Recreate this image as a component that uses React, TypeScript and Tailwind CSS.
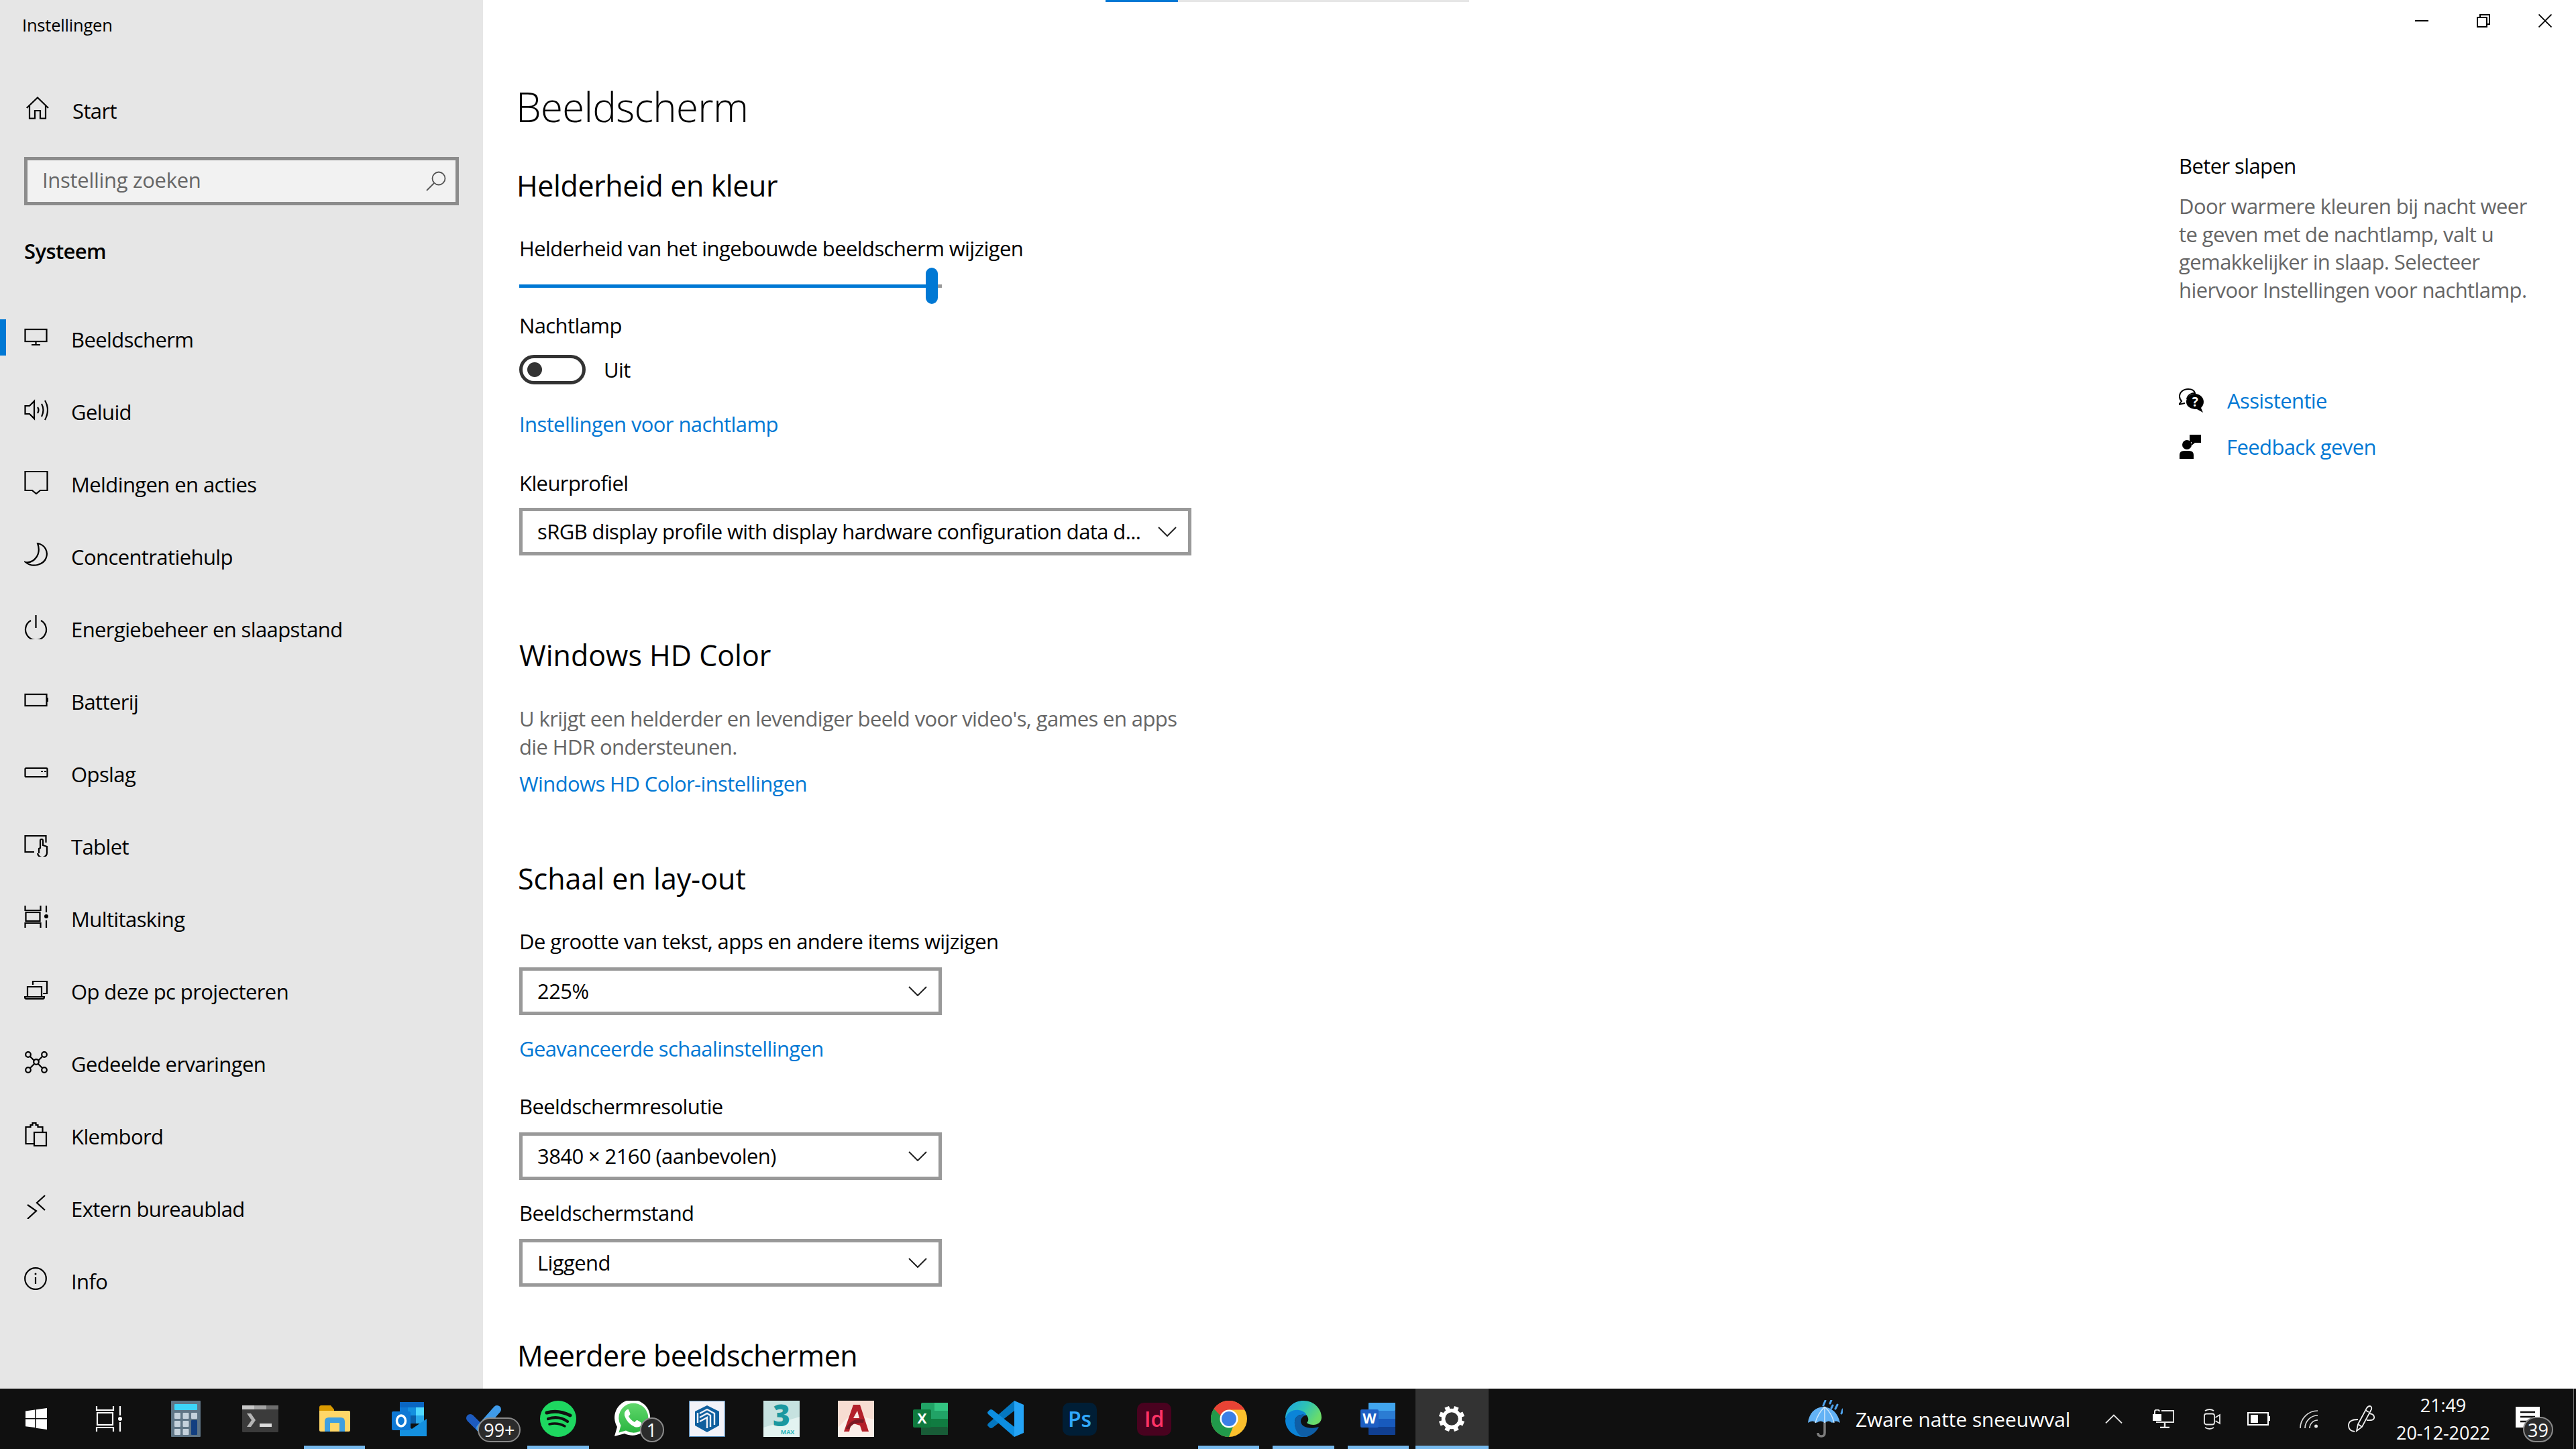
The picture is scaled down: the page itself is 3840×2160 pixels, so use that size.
import React from 'react';

const link = 'text-[#0078d4]';

const NavIcon: React.FC<{ children: React.ReactNode }> = ({ children }) => (
  <svg width="36" height="36" viewBox="0 0 36 36" fill="none" stroke="#000" strokeWidth="2.2" className="shrink-0 -mt-[6px]">
    {children}
  </svg>
);

const navItems: { label: string; icon: React.ReactNode }[] = [
  { label: 'Beeldscherm', icon: <><rect x="1.5" y="6" width="32" height="18" /><path d="M17.5 24v4.500M11 29h13" /></> },
  { label: 'Geluid', icon: <><path d="M1.500 12H8l7-7v26l-7-7H1.500z" /><path d="M20 14q3 4 0 9M26 9q5 9 0 19M31 4q8 14 0 29" /></> },
  { label: 'Meldingen en acties', icon: <path d="M1.500 2h33v28H24l-6 5-6-5H1.500z" /> },
  { label: 'Concentratiehulp', icon: <path d="M20 1c11 2 16 12 13 21-4 11-20 16-31 7 13 2 24-12 18-28z" /> },
  { label: 'Energiebeheer en slaapstand', icon: <><path d="M10 8a15.500 15.500 0 1 0 15 0" /><path d="M17.500 0v19" /></> },
  { label: 'Batterij', icon: <><rect x="1.500" y="10" width="32" height="17" /><path d="M34.500 15v6" strokeWidth="3" /></> },
  { label: 'Opslag', icon: <><rect x="1.500" y="12" width="33" height="13" rx="1.500" /><path d="M25 17h3M30 17h3" /></> },
  { label: 'Tablet', icon: <><path d="M15 29H1.500V5h31v10" /><path d="M22 31v-7l2-1v-11a2 2 0 0 1 4 0v7l6 2v8a7 7 0 0 1-14 2" /></> },
  { label: 'Multitasking', icon: <><path d="M1.500 1v7h23V1M1.500 34v-7h23v7" /><rect x="2.500" y="11" width="21" height="13" /><path d="M33 1v10M33 23v11" /><circle cx="33" cy="17" r="3" fill="#000" stroke="none" /></> },
  { label: 'Op deze pc projecteren', icon: <><path d="M13 11V6h21v18H28" /><path d="M5 28V14h21v14M1 29h29q0 3-2 3H3q-2 0-2-3z" /></> },
  { label: 'Gedeelde ervaringen', icon: <><circle cx="6" cy="7" r="3.800" /><circle cx="30" cy="7" r="3.800" /><circle cx="6" cy="30" r="3.800" /><circle cx="30" cy="30" r="3.800" /><circle cx="18" cy="18" r="3.800" /><path d="M9 10l6 6M27 10l-6 6M9 27l6-6M27 27l-6-6" /></> },
  { label: 'Klembord', icon: <><path d="M16 32H2.500V7h7V4h3V1h5v3h3v3h7v7" /><rect x="15" y="15" width="18" height="20" /></> },
  { label: 'Extern bureaublad', icon: <path d="M5 15l13 9-13 12M31 1L19 12l12 11" /> },
  { label: 'Info', icon: <><circle cx="17" cy="17" r="15.800" /><path d="M17 15v10" /><circle cx="17" cy="10" r="1.500" fill="#000" stroke="none" /></> },
];

const Dropdown: React.FC<{ value: string; width: string }> = ({ value, width }) => (
  <div className={`h-[71px] ${width} border-[5px] border-[#999999] flex items-center justify-between pl-[22px] pr-[17px] whitespace-nowrap`}>
    <span>{value}</span>
    <svg width="28" height="15" viewBox="0 0 28 15" fill="none" stroke="#222" strokeWidth="2" className="shrink-0"><path d="M1 1l13 13L27 1" /></svg>
  </div>
);

const TaskCell: React.FC<{ w?: string; bar?: boolean; active?: boolean; children: React.ReactNode }> = ({ w = 'w-[111.100px]', bar, active, children }) => (
  <div className={`relative h-full shrink-0 flex items-center justify-center ${w} ${active ? 'bg-[#333333]' : ''}`}>
    {children}
    {bar && <div className={`absolute bottom-0 h-[5px] bg-[#76b9ed] ${active ? 'inset-x-0' : 'inset-x-[10px]'}`} />}
  </div>
);

const Badge: React.FC<{ className: string; children: React.ReactNode }> = ({ className, children }) => (
  <div className={`absolute rounded-full bg-[#2b2b2b] border-[2px] border-[#8a8a8a] text-white flex items-center justify-center text-[27px] leading-none ${className}`}>{children}</div>
);

const gearTeeth = [22.5, 67.5, 112.5, 157.5, 202.5, 247.5, 292.5, 337.5];

const apps: { icon: React.ReactNode; bar?: boolean; active?: boolean; w?: string; badge?: React.ReactNode }[] = [
  { w: 'w-[108px]', icon: <svg width="32" height="32" viewBox="0 0 32 32" fill="#fff"><path d="M0 4.500L14 2.500V15H0zM15.500 2.300L32 0v15H15.500zM0 16.500h14V29L0 27.200zM15.500 16.500H32V32l-16.500-2.300z" /></svg> },
  { w: 'w-[113px]', icon: <svg width="40" height="38" viewBox="0 0 40 38" fill="none" stroke="#fff" strokeWidth="2.200" className="-ml-[6px]"><path d="M2 0v6h25V0M2 38v-6h25v6" /><rect x="3" y="10" width="23" height="18" /><path d="M37 0v14M37 24v14" /><circle cx="37" cy="19" r="3" fill="#fff" stroke="none" /></svg> },
  { icon: <svg width="44" height="54" viewBox="0 0 44 54"><rect width="44" height="54" rx="1" fill="#5f7585" /><rect x="5" y="5" width="34" height="9" rx="1" fill="#3dd5f8" /><g fill="#c5d2dc"><rect x="5" y="18" width="9" height="9" rx="1" /><rect x="17.500" y="18" width="9" height="9" rx="1" /><rect x="30" y="18" width="9" height="9" rx="1" /><rect x="5" y="30" width="9" height="9" rx="1" /><rect x="17.500" y="30" width="9" height="9" rx="1" /><rect x="5" y="42" width="9" height="9" rx="1" /><rect x="17.500" y="42" width="9" height="9" rx="1" /></g><rect x="30" y="29" width="9" height="22" rx="1" fill="#123f80" /></svg> },
  { icon: <svg width="54" height="40" viewBox="0 0 54 40"><rect width="54" height="40" rx="1.500" fill="#3b3b3b" /><rect width="18" height="6" fill="#c8c8c8" /><rect x="18" width="18" height="6" fill="#a4a4a4" /><rect x="36" width="18" height="6" fill="#6d6d6d" /><path d="M7 12l6 0 7 10-7 10-6 0 7-10z" fill="#b5b5b5" /><rect x="26" y="27" width="18" height="5" fill="#dcdcdc" /></svg> },
  { bar: true, icon: <svg width="48" height="40" viewBox="0 0 48 40"><path d="M1 3q0-3 3-3h14l5 6v12H1z" fill="#db9b00" /><path d="M1 8h44q2 0 2 2v27q0 2-2 2H3q-2 0-2-2z" fill="#ffd768" /><path d="M9 39V24q0-6 6-6h18q6 0 6 6v15h-8V26H17v13z" fill="#3f9fe0" /></svg> },
  { icon: <svg width="52" height="51" viewBox="0 0 52 51"><rect x="12" width="36" height="24" fill="#0a66c2" /><rect x="24" y="8" width="12" height="12" fill="#1490df" /><rect x="36" y="8" width="12" height="12" fill="#50d9ff" /><rect x="12" y="8" width="12" height="12" fill="#0f78d4" /><rect x="12" y="20" width="24" height="12" fill="#0a5ea8" /><rect x="36" y="20" width="12" height="12" fill="#28a8ea" /><path d="M12 28l18 12 22-15v26H12z" fill="#1490df" /><rect y="14" width="28" height="28" rx="2" fill="#0f78d4" /><ellipse cx="14" cy="28" rx="6.500" ry="8" fill="none" stroke="#fff" strokeWidth="3.500" /></svg> },
  { badge: <Badge className="left-[47px] top-[43px] w-[64px] h-[37px]">99+</Badge>, icon: <svg width="54" height="42" viewBox="0 0 54 42" fill="none" strokeLinecap="round" strokeWidth="12"><path d="M7 20l15 15" stroke="#1d5bbf" /><path d="M22 35L47 7" stroke="#3f9bea" /></svg> },
  { bar: true, icon: <svg width="54" height="54" viewBox="0 0 54 54"><circle cx="27" cy="27" r="27" fill="#1ed760" /><g fill="none" stroke="#101010" strokeLinecap="round"><path d="M10 18q17-5 35 4" strokeWidth="5" /><path d="M12 27q16-5 29 4" strokeWidth="4.200" /><path d="M14 35q12-3 23 3" strokeWidth="3.500" /></g></svg> },
  { badge: <Badge className="left-[66px] top-[43px] w-[36px] h-[37px]">1</Badge>, icon: <svg width="54" height="54" viewBox="0 0 54 54"><defs><linearGradient id="wa" x1="0" y1="0" x2="0" y2="1"><stop offset="0" stopColor="#61d86c" /><stop offset="1" stopColor="#2ab540" /></linearGradient></defs><path d="M0 53l4-14A26.500 26.500 0 1 1 15 49z" fill="#fff" /><path d="M6.500 47.500l3-10.500A22 22 0 1 1 17 44.500z" fill="url(#wa)" /><path d="M19 13q-5 3-4 9 3 11 15 17 7 2 10-3 1-3-1-4l-5-3q-2 0-3 2l-1 1q-6-3-9-9l2-2q1-1 0-3l-2-5z" fill="#fff" /></svg> },
  { icon: <svg width="54" height="54" viewBox="0 0 54 54"><rect x="0.500" y="0.500" width="53" height="53" fill="#f2f2f8" stroke="#4a84b5" /><path d="M27 7l18 9v21L27 47 9 37V16z" fill="#0f5f9e" /><path d="M16 19l11-6 11 6v17M16 25l11-6 5 3v17M16 31l11-6v16M13 18v15" stroke="#f2f2f8" strokeWidth="2.400" fill="none" /></svg> },
  { icon: <svg width="54" height="54" viewBox="0 0 54 54"><rect width="54" height="54" fill="#e3f3f1" /><path d="M0 0h54v24L0 40z" fill="#c6e2e0" /><text x="27" y="38" textAnchor="middle" fontSize="44" fontWeight="800" fill="#1b98a0">3</text><text x="36" y="50" textAnchor="middle" fontSize="9" fontWeight="700" fill="#28b7bd">MAX</text></svg> },
  { icon: <svg width="54" height="54" viewBox="0 0 54 54"><rect width="54" height="54" fill="#fbeee8" /><path d="M0 0h54v28L20 20 0 40z" fill="#f7ddd2" /><path d="M9 46L23 6h10l13 40H36l-3-9-13-4-3 13z" fill="#b3202a" /><path d="M23 26h9l-3-11z" fill="#fbeee8" /><path d="M12 42q8-17 27-14l-1 5q-16-2-21 9z" fill="#7c1a24" /></svg> },
  { icon: <svg width="52" height="48" viewBox="0 0 52 48"><rect x="12" width="40" height="48" rx="2" fill="#21a366" /><rect x="32" width="20" height="12" fill="#33c481" /><rect x="12" y="24" width="40" height="12" fill="#107c41" /><rect x="12" y="36" width="40" height="12" rx="1" fill="#185c37" /><rect y="10" width="27" height="27" rx="2" fill="#0f7a3e" /><text x="13.500" y="31" textAnchor="middle" fontSize="21" fontWeight="700" fill="#fff">X</text></svg> },
  { icon: <svg width="54" height="54" viewBox="0 0 54 54"><path d="M40 0v15L8 40q-3 2-5 0l-3-3q0-2 1-3z" fill="#0477c0" /><path d="M40 54V39L8 14q-3-2-5 0l-3 3q0 2 1 3z" fill="#0d8ee0" /><path d="M40 0l14 6v42l-14 6z" fill="#24a3f5" /></svg> },
  { icon: <svg width="51" height="49" viewBox="0 0 51 49"><rect width="51" height="49" rx="10" fill="#001e36" /><text x="25.500" y="36" textAnchor="middle" fontSize="32" fontWeight="600" fill="#31a8ff">Ps</text></svg> },
  { icon: <svg width="51" height="49" viewBox="0 0 51 49"><rect width="51" height="49" rx="10" fill="#49021f" /><text x="25.500" y="36" textAnchor="middle" fontSize="32" fontWeight="600" fill="#ff3366">Id</text></svg> },
  { bar: true, icon: <svg width="54" height="54" viewBox="0 0 54 54"><circle cx="27" cy="27" r="27" fill="#fbc02d" /><path d="M27 27L4.500 12A27 27 0 0 0 27 54l6-15z" fill="#219a4b" /><path d="M27 13.500h23.400A27 27 0 0 0 4.500 12L14 22z" fill="#e94335" /><circle cx="27" cy="27" r="13.500" fill="#fff" /><circle cx="27" cy="27" r="11" fill="#3b7fe6" /></svg> },
  { bar: true, icon: <svg width="54" height="54" viewBox="0 0 54 54"><defs><linearGradient id="edge" x1="0" y1="0" x2="1" y2="0.500"><stop offset="0.100" stopColor="#1fa8e0" /><stop offset="0.550" stopColor="#2fc4b2" /><stop offset="1" stopColor="#6bdc6a" /></linearGradient></defs><path d="M0 27C0 10 13 0 27 0c16 0 27 12 27 25 0 7-6 11-12 11-4 0-8-1-10-3 3-3 3-7 0-11-6-7-24-9-32 5z" fill="url(#edge)" /><path d="M0 29c1-12 12-16 20-15 7 1 12 5 11 8-6-3-16-1-17 9-1 11 8 22 20 22-2 1-5 1-7 1C11 54 0 42 0 29z" fill="#0b84d8" /><path d="M14 31c1-10 11-12 17-9-4 0-8 4-8 9 1 9 14 12 27 8-4 8-12 15-22 15-9-1-15-12-14-23z" fill="#0e5ea6" /></svg> },
  { bar: true, icon: <svg width="52" height="48" viewBox="0 0 52 48"><rect x="12" width="40" height="12" rx="1" fill="#41a5ee" /><rect x="12" y="12" width="40" height="12" fill="#2b7cd3" /><rect x="12" y="24" width="40" height="12" fill="#185abd" /><rect x="12" y="36" width="40" height="12" rx="1" fill="#103f91" /><rect y="10" width="27" height="27" rx="2" fill="#1e5fc4" /><text x="13.500" y="31" textAnchor="middle" fontSize="21" fontWeight="700" fill="#fff">W</text></svg> },
  { bar: true, active: true, w: 'w-[109px]', icon: <svg width="40" height="40" viewBox="0 0 40 40" fill="none" stroke="#fff"><circle cx="20" cy="20" r="12.500" strokeWidth="5.500" />{gearTeeth.map((a) => <path key={a} d="M20 7V0.800" strokeWidth="7" transform={`rotate(${a} 20 20)`} />)}</svg> },
];

const trayIcons: { w: string; icon: React.ReactNode }[] = [
  { w: 'w-[74px]', icon: <svg width="26" height="14" viewBox="0 0 26 14" fill="none" stroke="#e8e8e8" strokeWidth="1.800"><path d="M1 13.500L13 1.500l12 12" /></svg> },
  { w: 'w-[74px]', icon: <svg width="32" height="28" viewBox="0 0 32 28" fill="none" stroke="#e8e8e8" strokeWidth="1.800"><path d="M13 2h18v17H5" /><path d="M18 19v7M11 27h14" strokeWidth="2.500" /><rect x="0" y="7" width="13" height="10" fill="#fff" stroke="none" /><path d="M3 7V3q0-2.500 3.500-2.500T10 3" strokeWidth="2" /></svg> },
  { w: 'w-[70px]', icon: <svg width="25" height="33" viewBox="0 0 25 33" fill="none" stroke="#e8e8e8" strokeWidth="1.800"><path d="M2 4q7-4 13 0M2 29q7 4 13 0" /><rect x="1" y="8.500" width="15" height="16" rx="3" /><path d="M17.500 14L24 10v13l-6.500-4" /></svg> },
  { w: 'w-[70px]', icon: <svg width="34" height="20" viewBox="0 0 34 20"><rect x="1" y="1" width="30" height="18" fill="none" stroke="#fff" strokeWidth="2" /><rect x="5" y="4" width="11" height="12" fill="#fff" /><rect x="31.500" y="6" width="2.500" height="7" fill="#fff" /></svg> },
  { w: 'w-[78px]', icon: <svg width="27" height="27" viewBox="0 0 27 27" fill="none" stroke="#d8d8d8" strokeWidth="1.700"><path d="M1 27A26 26 0 0 1 27 1M8 27A19 19 0 0 1 27 8M15 27A12 12 0 0 1 27 15" /><circle cx="24.500" cy="24" r="2.500" fill="#e8e8e8" stroke="none" /></svg> },
  { w: 'w-[80px]', icon: <svg width="40" height="40" viewBox="0 0 40 40" fill="none" stroke="#f0f0f0" strokeWidth="1.800"><path d="M13 38l2-10L28 4q2-3 5-3 3 1 2 5L21 32zM15 28l6 4M26 7l5 3" /><path d="M32 12q8 1 7 7-1 4-11 3M15 21Q1 21 1 30q0 8 9 9" /></svg> },
];

const App: React.FC = () => {
  return (
    <div className="w-[3840px] h-[2160px] flex flex-col overflow-hidden font-['Open_Sans',sans-serif] text-[31px] tracking-[-0.6px] text-black bg-white">
      <div className="flex h-[2070px]">
        {/* sidebar */}
        <div className="w-[720px] shrink-0 bg-[#e6e6e6]">
          <div className="pl-[33px] pt-[18px] h-[58px] text-[25.500px] tracking-[-0.2px] leading-[38px]">Instellingen</div>
          <div className="flex items-center h-[60px] mt-[77px] pl-[39px]">
            <svg width="34" height="34" viewBox="0 0 34 34" fill="none" stroke="#000" strokeWidth="2.200" className="shrink-0 -mt-[8px]"><path d="M0.800 17L17 1.500 33 17M5 14v18.500h8V21h8v11.500h8V14" /></svg>
            <span className="ml-[35px]">Start</span>
          </div>
          <div className="ml-[36px] mt-[39px] w-[648px] h-[72px] border-[5px] border-[#8c8c8c] bg-[#f2f2f2] flex items-center justify-between pl-[22px] pr-[14px] text-[#666666]">
            <span className="-mt-[4px] tracking-[-0.3px]">Instelling zoeken</span>
            <svg width="30" height="30" viewBox="0 0 30 30" fill="none" stroke="#555" strokeWidth="1.800"><circle cx="19" cy="11" r="9.500" /><path d="M12 18L1 29" /></svg>
          </div>
          <div className="pl-[36px] mt-[46px] h-[44px] leading-[44px] font-semibold">Systeem</div>
          <nav className="mt-[56px]">
            {navItems.map((item, i) => (
              <div key={item.label} className="flex items-center h-[108px]">
                <div className={`w-[9px] h-[54px] shrink-0 -mt-[6px] ${i === 0 ? 'bg-[#0078d4]' : ''}`} />
                <div className="ml-[27px] flex items-center">{<NavIcon>{item.icon}</NavIcon>}</div>
                <span className="ml-[34px] whitespace-nowrap">{item.label}</span>
              </div>
            ))}
          </nav>
        </div>

        {/* content */}
        <div className="flex-1 flex justify-between">
          <div className="pl-[54px]">
            <div className="ml-[874px] w-[542px] h-[3px] bg-[#e6e6e6]"><div className="w-[108px] h-[3px] bg-[#0078d4]" /></div>
            <h1 className="-ml-[5px] mt-[114px] h-[84px] text-[60px] tracking-[-0.7px] leading-[84px] font-light whitespace-nowrap">Beeldscherm</h1>
            <h2 className="-ml-[4px] mt-[46px] h-[60px] text-[43px] tracking-[-0.4px] leading-[60px] whitespace-nowrap">Helderheid en kleur</h2>
            <div className="mt-[41px] h-[44px] leading-[44px] whitespace-nowrap">Helderheid van het ingebouwde beeldscherm wijzigen</div>
            <div className="mt-[7px] relative w-[630px] h-[54px] flex items-center">
              <div className="h-[5px] w-full bg-[#999999]"><div className="h-[5px] w-[615px] bg-[#0078d4]" /></div>
              <div className="absolute left-[606px] top-0 w-[18px] h-[54px] rounded-full bg-[#0078d4]" />
            </div>
            <div className="mt-[10px] h-[44px] leading-[44px]">Nachtlamp</div>
            <div className="mt-[22px] h-[44px] flex items-center">
              <div className="w-[99px] h-[44px] rounded-full border-[5px] border-[#333333] flex items-center pl-[7px]"><div className="w-[22px] h-[22px] rounded-full bg-[#333333]" /></div>
              <span className="ml-[27px]">Uit</span>
            </div>
            <div className={`mt-[37px] h-[44px] leading-[44px] ${link}`}>Instellingen voor nachtlamp</div>
            <div className="mt-[44px] h-[44px] leading-[44px]">Kleurprofiel</div>
            <div className="mt-[15px]"><Dropdown width="w-[1002px]" value="sRGB display profile with display hardware configuration data d..." /></div>

            <h2 className="mt-[119px] h-[60px] text-[43px] tracking-normal leading-[60px] whitespace-nowrap">Windows HD Color</h2>
            <p className="mt-[43px] text-[#666666] leading-[42px] whitespace-nowrap">U krijgt een helderder en levendiger beeld voor video's, games en apps<br />die HDR ondersteunen.</p>
            <div className={`mt-[12px] h-[44px] leading-[44px] ${link}`}>Windows HD Color-instellingen</div>

            <h2 className="-ml-[2px] mt-[90px] h-[60px] text-[43px] tracking-normal leading-[60px] whitespace-nowrap">Schaal en lay-out</h2>
            <div className="mt-[41px] h-[44px] leading-[44px] whitespace-nowrap">De grootte van tekst, apps en andere items wijzigen</div>
            <div className="mt-[17px]"><Dropdown width="w-[630px]" value="225%" /></div>
            <div className={`mt-[28px] h-[44px] leading-[44px] ${link}`}>Geavanceerde schaalinstellingen</div>
            <div className="mt-[42px] h-[44px] leading-[44px]">Beeldschermresolutie</div>
            <div className="mt-[17px]"><Dropdown width="w-[630px]" value="3840 × 2160 (aanbevolen)" /></div>
            <div className="mt-[27px] h-[44px] leading-[44px]">Beeldschermstand</div>
            <div className="mt-[17px]"><Dropdown width="w-[630px]" value="Liggend" /></div>
            <h2 className="-ml-[3px] mt-[73px] h-[60px] text-[43px] tracking-[-0.55px] leading-[60px] whitespace-nowrap">Meerdere beeldschermen</h2>
          </div>

          {/* right column */}
          <div className="w-[592px] shrink-0">
            <div className="flex justify-end h-[62px]">
              <div className="w-[92px] flex items-center justify-center"><div className="w-[20px] h-[2px] bg-black" /></div>
              <div className="w-[92px] flex items-center justify-center">
                <svg width="20" height="20" viewBox="0 0 20 20" fill="none" stroke="#000" strokeWidth="2"><rect x="1" y="5" width="14" height="14" /><path d="M5 5V1h14v14h-4" /></svg>
              </div>
              <div className="w-[92px] flex items-center justify-center">
                <svg width="20" height="20" viewBox="0 0 20 20" fill="none" stroke="#000" strokeWidth="1.800"><path d="M0.500 0.500l19 19M19.500 0.500l-19 19" /></svg>
              </div>
            </div>
            <div className="mt-[163px] h-[44px] leading-[44px]">Beter slapen</div>
            <p className="mt-[18px] text-[#666666] leading-[41.700px] whitespace-nowrap">Door warmere kleuren bij nacht weer<br />te geven met de nachtlamp, valt u<br />gemakkelijker in slaap. Selecteer<br />hiervoor Instellingen voor nachtlamp.</p>
            <div className="mt-[115px] h-[56px] flex items-center">
              <svg width="37" height="36" viewBox="0 0 37 36" className="shrink-0"><path d="M14 1C6 1 1 6 1 12c0 3 1 5 3 7l-4 5 9-2" fill="none" stroke="#000" strokeWidth="2" /><path d="M14 1c5 0 9 2 10 6-6 0-11 3-12 9" fill="none" stroke="#000" strokeWidth="2" /><path d="M24 8c7 0 13 5 13 12 0 4-2 7-4 9l3 7-9-5C14 31 11 24 11 20 11 13 17 8 24 8z" fill="#000" /><text x="24" y="27" textAnchor="middle" fontSize="19" fontWeight="700" fill="#fff">?</text></svg>
              <span className={`ml-[35px] ${link}`}>Assistentie</span>
            </div>
            <div className="mt-[13px] h-[56px] flex items-center">
              <svg width="33" height="36" viewBox="0 0 33 36" className="shrink-0 ml-[1px]"><circle cx="11" cy="15" r="7" /><path d="M0 36v-6q0-6 7-6h7q7 0 7 6v6z" /><path d="M15 0h17v12H23l-5 4v-5h-3z" /></svg>
              <span className={`ml-[37px] ${link}`}>Feedback geven</span>
            </div>
          </div>
        </div>
      </div>

      {/* taskbar */}
      <div className="h-[90px] bg-[#101010] text-white flex items-center tracking-normal">
        {apps.map((a, i) => (
          <TaskCell key={i} w={a.w} bar={a.bar} active={a.active}>
            {a.icon}
            {a.badge}
          </TaskCell>
        ))}
        <div className="flex-1" />
        <div className="w-[440px] shrink-0 flex items-center pl-[20px]">
          <svg width="53" height="56" viewBox="0 0 53 56" fill="none" className="shrink-0">
            <path d="M26 22v27q0 5-5 5t-5-5" stroke="#7b7b7b" strokeWidth="3.500" />
            <path d="M1 34Q4 12 24 10q20 2 25 24-6-5-12 0-5-5-11 0-6-5-12 0-6-5-13 0z" fill="#63b2f5" />
            <path d="M26 10v24M12 34q4-14 14-24M40 34q-3-14-14-24" stroke="#cfe7fb" strokeWidth="1.500" />
            <path d="M24 8l3-7M34 5l2-5M42 13l3-6M51 20l2-6M36 12l2-4" stroke="#4ea1ea" strokeWidth="3" strokeLinecap="round" />
          </svg>
          <span className="ml-[19px] text-[30px] tracking-[-0.1px] whitespace-nowrap">Zware natte sneeuwval</span>
        </div>
        {trayIcons.map((t, i) => (
          <div key={i} className={`${t.w} shrink-0 flex items-center justify-center`}>{t.icon}</div>
        ))}
        <div className="w-[180px] shrink-0 pr-[16px] flex flex-col items-center text-[27px] tracking-[-0.1px] leading-[41px]">
          <span>21:49</span>
          <span className="whitespace-nowrap">20-12-2022</span>
        </div>
        <div className="relative w-[94px] h-full shrink-0">
          <svg width="36" height="31" viewBox="0 0 36 31" className="absolute left-[10px] top-[27px]"><rect width="36" height="31" fill="#fff" /><path d="M7 8h22M7 15h22M7 22h14" stroke="#101010" strokeWidth="2.500" /></svg>
          <Badge className="left-[21px] top-[42px] w-[45px] h-[38px]">39</Badge>
        </div>
        <div className="w-[6px] h-full shrink-0 flex"><div className="w-[1px] h-full bg-[#777777] ml-[2px]" /></div>
      </div>
    </div>
  );
};

export default App;
